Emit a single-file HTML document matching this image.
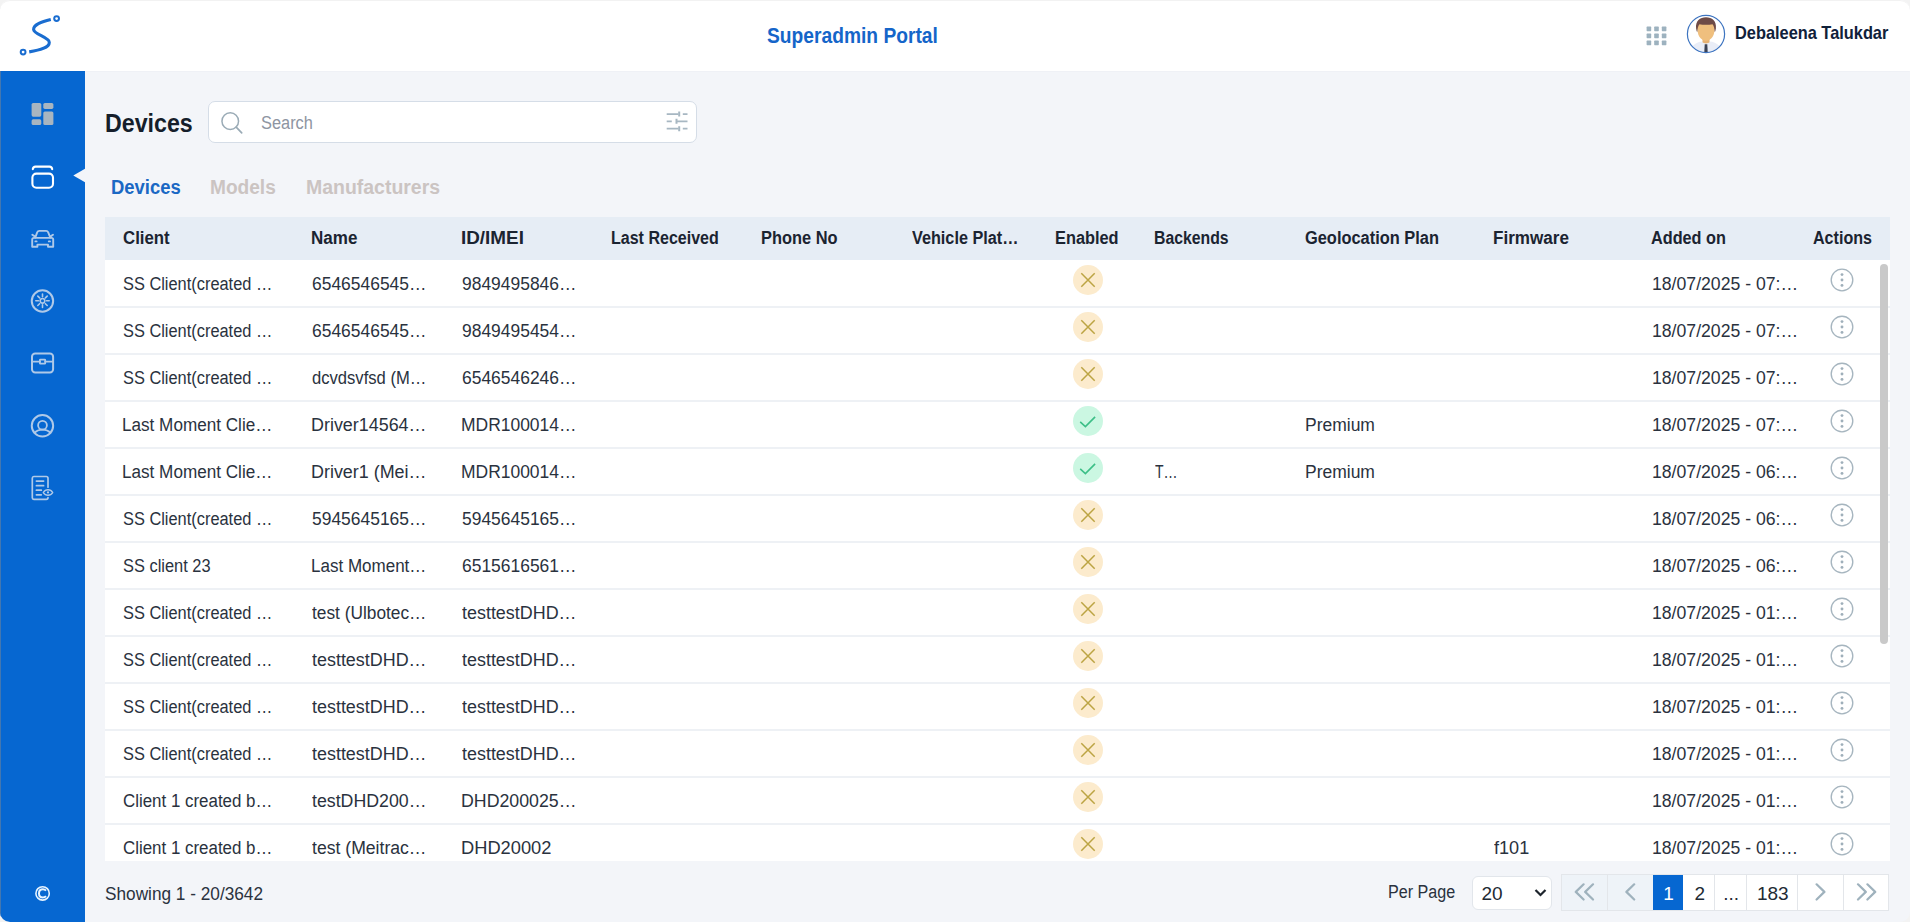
<!DOCTYPE html>
<html lang="en">
<head>
<meta charset="utf-8">
<title>Devices - Superadmin Portal</title>
<style>
*{box-sizing:border-box;}
html,body{margin:0;padding:0;width:1910px;height:922px;overflow:hidden;background:#f3f3f3;}
body{font-family:"Liberation Sans", sans-serif;position:relative;}
.app{position:absolute;left:0;top:0;width:1910px;height:922px;border-radius:10px;overflow:hidden;background:#f3f5f9;}
.frame{position:absolute;left:0;top:0;width:1910px;height:922px;border-top:1px solid #f2f2f2;border-radius:10px;pointer-events:none;z-index:3;}
.sbedge{position:absolute;left:0;top:71px;width:1px;height:851px;background:#4377b0;z-index:3;}
.header{position:absolute;left:0;top:0;width:1910px;height:71px;background:#ffffff;box-shadow:0 0.5px 1.5px rgba(20,30,50,0.05);z-index:1;}
.sidebar{position:absolute;left:0;top:71px;width:85px;height:851px;background:#0667d1;overflow:hidden;}
.tx{position:absolute;white-space:nowrap;line-height:1;transform-origin:0 50%;z-index:2;}
.search{position:absolute;left:208px;top:100.6px;width:489px;height:42px;border:1.6px solid #d5dde7;border-radius:7px;background:#fff;}
.thead{position:absolute;left:105px;top:217px;width:1785px;height:43px;background:#e6edf5;}
.tbody{position:absolute;left:105px;top:260px;width:1785px;height:601px;background:#fff;overflow:hidden;}
.rline{position:absolute;left:0;width:1785px;height:2px;background:#eef1f5;}
.scroll{position:absolute;left:1880px;top:264px;width:8px;height:380px;border-radius:4px;background:#c9c9c9;}
.select{position:absolute;left:1471.5px;top:875.5px;width:80px;height:34.5px;border:1px solid #e2e6eb;border-radius:6px;background:#fff;}
.pag{position:absolute;left:1561px;top:874px;height:37px;width:328px;border:1px solid #e3e6ea;background:#fff;}
.pb{position:absolute;top:0;height:35px;}
.sep{position:absolute;top:0;width:1px;height:35px;background:#e3e6ea;}
</style>
</head>
<body>
<div class="app">
  <div class="header">
    <svg width="80" height="70" style="position:absolute;left:0;top:0" viewBox="0 0 80 70">
      <path d="M50.8,19.6 C42,21.8 33.6,24.3 33.6,29.5 C33.6,34.3 49.3,37.2 49.3,42.4 C49.3,47.6 40,50 29.2,51.9" fill="none" stroke="#1a6dd0" stroke-width="3.1" stroke-linecap="butt"/>
      <circle cx="56.6" cy="18.6" r="2.4" fill="none" stroke="#1a6dd0" stroke-width="2"/>
      <circle cx="23.1" cy="52.1" r="2.4" fill="none" stroke="#1a6dd0" stroke-width="2"/>
    </svg>
    <svg width="24" height="24" style="position:absolute;left:1645px;top:25px" viewBox="0 0 24 24">
      <g fill="#9db2bf">
        <rect x="1.6" y="1.6" width="4.6" height="4.6" rx="0.6"/><rect x="9.2" y="1.6" width="4.6" height="4.6" rx="0.6"/><rect x="16.8" y="1.6" width="4.6" height="4.6" rx="0.6"/>
        <rect x="1.6" y="8.6" width="4.6" height="4.6" rx="0.6"/><rect x="9.2" y="8.6" width="4.6" height="4.6" rx="0.6"/><rect x="16.8" y="8.6" width="4.6" height="4.6" rx="0.6"/>
        <rect x="1.6" y="15.6" width="4.6" height="4.6" rx="0.6"/><rect x="9.2" y="15.6" width="4.6" height="4.6" rx="0.6"/><rect x="16.8" y="15.6" width="4.6" height="4.6" rx="0.6"/>
      </g>
    </svg>
    <svg width="40" height="40" style="position:absolute;left:1686px;top:14px" viewBox="0 0 40 40">
      <defs><clipPath id="av"><circle cx="20" cy="20" r="18.6"/></clipPath></defs>
      <circle cx="20" cy="20" r="18.6" fill="#ffffff"/>
      <g clip-path="url(#av)">
        <path d="M3,42 C4,31 10,27.2 20,27.2 C30,27.2 36,31 37,42 Z" fill="#e9edf7"/>
        <path d="M16.5,23.5 L23.5,23.5 L23.5,28.3 C22,29.8 18,29.8 16.5,28.3 Z" fill="#e6b273"/>
        <path d="M18.7,30.2 L21.3,30.2 L21.8,40 L18.2,40 Z" fill="#3b4254"/>
        <path d="M11.2,13 C11.2,20.5 14,26.7 20,26.7 C26,26.7 28.8,20.5 28.8,13 C28.8,9.8 25,8.5 20,8.5 C15,8.5 11.2,9.8 11.2,13 Z" fill="#efbf7e"/>
        <path d="M10.1,14.5 C9.3,6.5 14,3.2 20,3.2 C26,3.2 30.7,6.5 29.9,14.5 C29.6,16 29.3,17.5 28.8,18.3 C28.5,14.5 27.8,11.3 26.5,10.2 C23,11 17,11 13.5,10.2 C12.2,11.3 11.5,14.5 11.2,18.3 C10.7,17.5 10.4,16 10.1,14.5 Z" fill="#6e4b47"/>
      </g>
      <circle cx="20" cy="20" r="18.6" fill="none" stroke="#3d74c0" stroke-width="1.2"/>
    </svg>
  </div>
  <div class="sidebar">
    <svg width="85" height="851" style="position:absolute;left:0;top:0" viewBox="0 71 85 851">
      <!-- dashboard -->
      <g fill="#a8b5c0">
        <rect x="31.6" y="103" width="9.7" height="13.7" rx="1.6"/>
        <rect x="31.6" y="119.3" width="9.7" height="5.8" rx="1.6"/>
        <rect x="43.3" y="103" width="10.1" height="5.9" rx="1.6"/>
        <rect x="43.3" y="111.5" width="10.1" height="13.6" rx="1.6"/>
      </g>
      <!-- devices (active) -->
      <g fill="none" stroke="#ffffff" stroke-width="2.1" stroke-linecap="round">
        <path d="M32.8,169.2 C33,167.3 34,166.6 35.5,166.6 H49.5 C51,166.6 52,167.3 52.2,169.2"/>
        <rect x="32.4" y="173.6" width="20.6" height="14.2" rx="4"/>
      </g>
      <path d="M73.3,175.6 L86,168.3 L86,182.9 Z" fill="#f3f5f9"/>
      <g fill="none" stroke="#afc9e8" stroke-width="1.9" stroke-linecap="round" stroke-linejoin="round">
        <!-- car -->
        <path d="M35.2,237.6 L37.2,232.3 C37.6,231.3 38.3,230.9 39.3,230.9 H46.1 C47.1,230.9 47.8,231.3 48.2,232.3 L50.3,237.6"/>
        <path d="M32.3,234.7 L35.2,236.6 M53,234.7 L50.2,236.6"/>
        <path d="M34,237.9 H51.5 C52.5,237.9 53.2,238.6 53.2,239.6 V246.8 H48 V244.6 H37.4 V246.8 H32.2 V239.6 C32.2,238.6 32.9,237.9 34,237.9 Z"/>
        <path d="M35.4,241.4 H36.6 M48.8,241.4 H50"/>
        <!-- sun circle -->
        <circle cx="42.45" cy="301" r="10.7" stroke-width="2"/>
        <circle cx="42.5" cy="300.8" r="2.3" stroke-width="1.6"/>
        <path d="M42.5,294.1 V296.8 M42.5,304.8 V307.5 M35.8,300.8 H38.5 M46.5,300.8 H49.2 M37.8,296.1 L39.6,297.9 M45.4,303.7 L47.2,305.5 M47.2,296.1 L45.4,297.9 M39.6,303.7 L37.8,305.5" stroke-width="1.6"/>
        <!-- chest -->
        <rect x="32" y="353.5" width="21.1" height="18.9" rx="3.2" stroke-width="2"/>
        <path d="M32.5,361.6 H39.8 M45.3,361.6 H52.6" stroke-width="1.8"/>
        <rect x="39.9" y="359.6" width="5.3" height="4.1" rx="0.5" stroke-width="1.8"/>
        <!-- user -->
        <circle cx="42.45" cy="425.8" r="10.7" stroke-width="2"/>
        <circle cx="42.5" cy="425.3" r="4.4" stroke-width="1.8"/>
        <path d="M34.6,433 C36.3,430.8 38.8,429.6 42.5,429.6 C46.2,429.6 48.7,430.8 50.4,433" stroke-width="1.8"/>
        <!-- document eye -->
        <path d="M48,487.2 V478.2 C48,477 47.3,476.5 46.3,476.5 H33.8 C32.8,476.5 32.3,477.1 32.3,478.2 V497.7 C32.3,498.8 32.8,499.3 33.8,499.3 H46.3 C47.3,499.3 48,498.8 48,497.7" stroke-width="1.7"/>
        <path d="M36.4,481.1 H43.6 M36.4,485.7 H43.6 M36.4,490.2 H41.3 M36.4,494.8 H41.3" stroke-width="1.7"/>
        <path d="M43.3,492.6 C44.5,490.6 46,489.8 48,489.8 C50,489.8 51.5,490.6 52.7,492.6 C51.5,494.5 50,495.3 48,495.3 C46,495.3 44.5,494.5 43.3,492.6 Z" stroke-width="1.4"/>
        <circle cx="48" cy="492.4" r="1.1" fill="#afc9e8" stroke="none"/>
      </g>
      <!-- copyright -->
      <g fill="none" stroke="#e8f4ff" stroke-width="1.6">
        <circle cx="42.6" cy="893.4" r="6.7"/>
        <path d="M46,890.6 C45.2,889.7 44.1,889.3 42.9,889.3 C40.5,889.3 39,891.1 39,893.4 C39,895.7 40.5,897.4 42.9,897.4 C44.1,897.4 45.2,897 46,896.1" stroke-width="2"/>
      </g>
    </svg>
  </div>

  <div class="search">
    <svg width="26" height="26" style="position:absolute;left:12px;top:10.6px" viewBox="0 0 26 26">
      <circle cx="9.25" cy="9.15" r="8.3" fill="none" stroke="#9aabb6" stroke-width="1.5"/>
      <path d="M15.2,15.1 L20.7,20.8" stroke="#9aabb6" stroke-width="1.7" stroke-linecap="round"/>
    </svg>
    <svg width="26" height="26" style="position:absolute;left:456px;top:8px" viewBox="0 0 26 26">
      <g stroke="#a7b7c2" stroke-width="1.7" fill="none">
        <path d="M1.7,4.1 H13.5 M17.8,4.1 H22.5 M1.7,11.3 H6.8 M12,11.3 H22.5 M1.7,18.7 H13.5 M17.8,18.7 H22.5"/>
        <path d="M14.2,1.6 V6.6 M11.5,8.8 V13.8 M14.2,16.2 V21.2" stroke-width="2"/>
      </g>
    </svg>
  </div>

  <div class="thead"></div>
  <div class="tbody">
<div class="rline" style="top:46.0px"></div>
<div class="rline" style="top:93.0px"></div>
<div class="rline" style="top:140.0px"></div>
<div class="rline" style="top:187.0px"></div>
<div class="rline" style="top:234.0px"></div>
<div class="rline" style="top:281.0px"></div>
<div class="rline" style="top:328.0px"></div>
<div class="rline" style="top:375.0px"></div>
<div class="rline" style="top:422.0px"></div>
<div class="rline" style="top:469.0px"></div>
<div class="rline" style="top:516.0px"></div>
<div class="rline" style="top:563.0px"></div>
  </div>
  <div class="scroll"></div>

  <div class="select">
    <svg width="14" height="10" style="position:absolute;left:61.5px;top:11.5px" viewBox="0 0 14 10">
      <path d="M1.5,2 L6.5,7 L11.5,2" fill="none" stroke="#1e252d" stroke-width="2.2" stroke-linecap="butt"/>
    </svg>
  </div>
  <div class="pag">
<div class="pb" style="left:0.0px;width:45.5px;background:#eef3f8"></div>
<div class="pb" style="left:45.5px;width:45.5px;background:#eef3f8"></div>
<div class="pb" style="left:91.0px;width:30.0px;background:#0667d1"></div>
<div class="pb" style="left:121.0px;width:31.5px;background:#fff"></div>
<div class="pb" style="left:152.5px;width:32.1px;background:#fff"></div>
<div class="pb" style="left:184.6px;width:50.7px;background:#fff"></div>
<div class="pb" style="left:235.3px;width:46.1px;background:#fff"></div>
<div class="pb" style="left:281.4px;width:44.6px;background:#fff"></div>
<div class="sep" style="left:45.0px"></div>
<div class="sep" style="left:152.0px"></div>
<div class="sep" style="left:184.1px"></div>
<div class="sep" style="left:234.8px"></div>
<div class="sep" style="left:280.9px"></div>
<svg width="328" height="37" style="position:absolute;left:-1px;top:-1px" viewBox="1561 874 328 37"><path d="M1583.6,884.3 L1575.8,891.9 L1583.6,899.5 M1593,884.3 L1585.2,891.9 L1593,899.5 M1634.2,884.3 L1626.4,891.9 L1634.2,899.5 M1816.6,884.3 L1824.4,891.9 L1816.6,899.5 M1858,884.3 L1865.8,891.9 L1858,899.5 M1867.4,884.3 L1875.2,891.9 L1867.4,899.5" fill="none" stroke="#9fb2bd" stroke-width="2.2" stroke-linecap="round" stroke-linejoin="round"/></svg>
  </div>
<div class="sbedge"></div>
<svg class="ic" width="32" height="32" style="position:absolute;left:1072.0px;top:263.9px" viewBox="0 0 32 32"><circle cx="16" cy="16" r="15" fill="#fcebcd"/><path d="M9.3,9.3 L22.7,22.7 M22.7,9.3 L9.3,22.7" stroke="#bca443" stroke-width="1.5" fill="none"/></svg>
<svg width="26" height="26" style="position:absolute;left:1829.2px;top:266.8px" viewBox="0 0 26 26"><circle cx="13" cy="13" r="10.8" fill="none" stroke="#a6b5bf" stroke-width="1.35"/><circle cx="13" cy="7.6" r="1.45" fill="#9fafba"/><circle cx="13" cy="13" r="1.45" fill="#9fafba"/><circle cx="13" cy="18.4" r="1.45" fill="#9fafba"/></svg>
<svg class="ic" width="32" height="32" style="position:absolute;left:1072.0px;top:310.9px" viewBox="0 0 32 32"><circle cx="16" cy="16" r="15" fill="#fcebcd"/><path d="M9.3,9.3 L22.7,22.7 M22.7,9.3 L9.3,22.7" stroke="#bca443" stroke-width="1.5" fill="none"/></svg>
<svg width="26" height="26" style="position:absolute;left:1829.2px;top:313.8px" viewBox="0 0 26 26"><circle cx="13" cy="13" r="10.8" fill="none" stroke="#a6b5bf" stroke-width="1.35"/><circle cx="13" cy="7.6" r="1.45" fill="#9fafba"/><circle cx="13" cy="13" r="1.45" fill="#9fafba"/><circle cx="13" cy="18.4" r="1.45" fill="#9fafba"/></svg>
<svg class="ic" width="32" height="32" style="position:absolute;left:1072.0px;top:357.9px" viewBox="0 0 32 32"><circle cx="16" cy="16" r="15" fill="#fcebcd"/><path d="M9.3,9.3 L22.7,22.7 M22.7,9.3 L9.3,22.7" stroke="#bca443" stroke-width="1.5" fill="none"/></svg>
<svg width="26" height="26" style="position:absolute;left:1829.2px;top:360.8px" viewBox="0 0 26 26"><circle cx="13" cy="13" r="10.8" fill="none" stroke="#a6b5bf" stroke-width="1.35"/><circle cx="13" cy="7.6" r="1.45" fill="#9fafba"/><circle cx="13" cy="13" r="1.45" fill="#9fafba"/><circle cx="13" cy="18.4" r="1.45" fill="#9fafba"/></svg>
<svg class="ic" width="32" height="32" style="position:absolute;left:1072.0px;top:404.9px" viewBox="0 0 32 32"><circle cx="16" cy="16" r="15" fill="#cbf7e2"/><path d="M8.2,16.9 L13.4,21.6 L23.1,11.9" stroke="#3cbf87" stroke-width="1.6" fill="none"/></svg>
<svg width="26" height="26" style="position:absolute;left:1829.2px;top:407.8px" viewBox="0 0 26 26"><circle cx="13" cy="13" r="10.8" fill="none" stroke="#a6b5bf" stroke-width="1.35"/><circle cx="13" cy="7.6" r="1.45" fill="#9fafba"/><circle cx="13" cy="13" r="1.45" fill="#9fafba"/><circle cx="13" cy="18.4" r="1.45" fill="#9fafba"/></svg>
<svg class="ic" width="32" height="32" style="position:absolute;left:1072.0px;top:451.9px" viewBox="0 0 32 32"><circle cx="16" cy="16" r="15" fill="#cbf7e2"/><path d="M8.2,16.9 L13.4,21.6 L23.1,11.9" stroke="#3cbf87" stroke-width="1.6" fill="none"/></svg>
<svg width="26" height="26" style="position:absolute;left:1829.2px;top:454.8px" viewBox="0 0 26 26"><circle cx="13" cy="13" r="10.8" fill="none" stroke="#a6b5bf" stroke-width="1.35"/><circle cx="13" cy="7.6" r="1.45" fill="#9fafba"/><circle cx="13" cy="13" r="1.45" fill="#9fafba"/><circle cx="13" cy="18.4" r="1.45" fill="#9fafba"/></svg>
<svg class="ic" width="32" height="32" style="position:absolute;left:1072.0px;top:498.9px" viewBox="0 0 32 32"><circle cx="16" cy="16" r="15" fill="#fcebcd"/><path d="M9.3,9.3 L22.7,22.7 M22.7,9.3 L9.3,22.7" stroke="#bca443" stroke-width="1.5" fill="none"/></svg>
<svg width="26" height="26" style="position:absolute;left:1829.2px;top:501.8px" viewBox="0 0 26 26"><circle cx="13" cy="13" r="10.8" fill="none" stroke="#a6b5bf" stroke-width="1.35"/><circle cx="13" cy="7.6" r="1.45" fill="#9fafba"/><circle cx="13" cy="13" r="1.45" fill="#9fafba"/><circle cx="13" cy="18.4" r="1.45" fill="#9fafba"/></svg>
<svg class="ic" width="32" height="32" style="position:absolute;left:1072.0px;top:545.9px" viewBox="0 0 32 32"><circle cx="16" cy="16" r="15" fill="#fcebcd"/><path d="M9.3,9.3 L22.7,22.7 M22.7,9.3 L9.3,22.7" stroke="#bca443" stroke-width="1.5" fill="none"/></svg>
<svg width="26" height="26" style="position:absolute;left:1829.2px;top:548.8px" viewBox="0 0 26 26"><circle cx="13" cy="13" r="10.8" fill="none" stroke="#a6b5bf" stroke-width="1.35"/><circle cx="13" cy="7.6" r="1.45" fill="#9fafba"/><circle cx="13" cy="13" r="1.45" fill="#9fafba"/><circle cx="13" cy="18.4" r="1.45" fill="#9fafba"/></svg>
<svg class="ic" width="32" height="32" style="position:absolute;left:1072.0px;top:592.9px" viewBox="0 0 32 32"><circle cx="16" cy="16" r="15" fill="#fcebcd"/><path d="M9.3,9.3 L22.7,22.7 M22.7,9.3 L9.3,22.7" stroke="#bca443" stroke-width="1.5" fill="none"/></svg>
<svg width="26" height="26" style="position:absolute;left:1829.2px;top:595.8px" viewBox="0 0 26 26"><circle cx="13" cy="13" r="10.8" fill="none" stroke="#a6b5bf" stroke-width="1.35"/><circle cx="13" cy="7.6" r="1.45" fill="#9fafba"/><circle cx="13" cy="13" r="1.45" fill="#9fafba"/><circle cx="13" cy="18.4" r="1.45" fill="#9fafba"/></svg>
<svg class="ic" width="32" height="32" style="position:absolute;left:1072.0px;top:639.9px" viewBox="0 0 32 32"><circle cx="16" cy="16" r="15" fill="#fcebcd"/><path d="M9.3,9.3 L22.7,22.7 M22.7,9.3 L9.3,22.7" stroke="#bca443" stroke-width="1.5" fill="none"/></svg>
<svg width="26" height="26" style="position:absolute;left:1829.2px;top:642.8px" viewBox="0 0 26 26"><circle cx="13" cy="13" r="10.8" fill="none" stroke="#a6b5bf" stroke-width="1.35"/><circle cx="13" cy="7.6" r="1.45" fill="#9fafba"/><circle cx="13" cy="13" r="1.45" fill="#9fafba"/><circle cx="13" cy="18.4" r="1.45" fill="#9fafba"/></svg>
<svg class="ic" width="32" height="32" style="position:absolute;left:1072.0px;top:686.9px" viewBox="0 0 32 32"><circle cx="16" cy="16" r="15" fill="#fcebcd"/><path d="M9.3,9.3 L22.7,22.7 M22.7,9.3 L9.3,22.7" stroke="#bca443" stroke-width="1.5" fill="none"/></svg>
<svg width="26" height="26" style="position:absolute;left:1829.2px;top:689.8px" viewBox="0 0 26 26"><circle cx="13" cy="13" r="10.8" fill="none" stroke="#a6b5bf" stroke-width="1.35"/><circle cx="13" cy="7.6" r="1.45" fill="#9fafba"/><circle cx="13" cy="13" r="1.45" fill="#9fafba"/><circle cx="13" cy="18.4" r="1.45" fill="#9fafba"/></svg>
<svg class="ic" width="32" height="32" style="position:absolute;left:1072.0px;top:733.9px" viewBox="0 0 32 32"><circle cx="16" cy="16" r="15" fill="#fcebcd"/><path d="M9.3,9.3 L22.7,22.7 M22.7,9.3 L9.3,22.7" stroke="#bca443" stroke-width="1.5" fill="none"/></svg>
<svg width="26" height="26" style="position:absolute;left:1829.2px;top:736.8px" viewBox="0 0 26 26"><circle cx="13" cy="13" r="10.8" fill="none" stroke="#a6b5bf" stroke-width="1.35"/><circle cx="13" cy="7.6" r="1.45" fill="#9fafba"/><circle cx="13" cy="13" r="1.45" fill="#9fafba"/><circle cx="13" cy="18.4" r="1.45" fill="#9fafba"/></svg>
<svg class="ic" width="32" height="32" style="position:absolute;left:1072.0px;top:780.9px" viewBox="0 0 32 32"><circle cx="16" cy="16" r="15" fill="#fcebcd"/><path d="M9.3,9.3 L22.7,22.7 M22.7,9.3 L9.3,22.7" stroke="#bca443" stroke-width="1.5" fill="none"/></svg>
<svg width="26" height="26" style="position:absolute;left:1829.2px;top:783.8px" viewBox="0 0 26 26"><circle cx="13" cy="13" r="10.8" fill="none" stroke="#a6b5bf" stroke-width="1.35"/><circle cx="13" cy="7.6" r="1.45" fill="#9fafba"/><circle cx="13" cy="13" r="1.45" fill="#9fafba"/><circle cx="13" cy="18.4" r="1.45" fill="#9fafba"/></svg>
<svg class="ic" width="32" height="32" style="position:absolute;left:1072.0px;top:827.9px" viewBox="0 0 32 32"><circle cx="16" cy="16" r="15" fill="#fcebcd"/><path d="M9.3,9.3 L22.7,22.7 M22.7,9.3 L9.3,22.7" stroke="#bca443" stroke-width="1.5" fill="none"/></svg>
<svg width="26" height="26" style="position:absolute;left:1829.2px;top:830.8px" viewBox="0 0 26 26"><circle cx="13" cy="13" r="10.8" fill="none" stroke="#a6b5bf" stroke-width="1.35"/><circle cx="13" cy="7.6" r="1.45" fill="#9fafba"/><circle cx="13" cy="13" r="1.45" fill="#9fafba"/><circle cx="13" cy="18.4" r="1.45" fill="#9fafba"/></svg>
<span class="tx" style="left:767.0px;top:25.60px;font-size:21.5px;font-weight:700;color:#1565c9;transform:scaleX(0.8939);">Superadmin Portal</span>
<span class="tx" style="left:1735.1px;top:23.12px;font-size:19px;font-weight:700;color:#10213a;transform:scaleX(0.8609);">Debaleena Talukdar</span>
<span class="tx" style="left:105.1px;top:110.94px;font-size:25px;font-weight:700;color:#151e2b;transform:scaleX(0.9286);">Devices</span>
<span class="tx" style="left:261.0px;top:113.96px;font-size:18px;font-weight:400;color:#8e95a2;transform:scaleX(0.9104);">Search</span>
<span class="tx" style="left:110.5px;top:177.07px;font-size:20px;font-weight:700;color:#1a68c4;transform:scaleX(0.9222);">Devices</span>
<span class="tx" style="left:210.2px;top:177.07px;font-size:20px;font-weight:700;color:#cbc4c2;transform:scaleX(0.9547);">Models</span>
<span class="tx" style="left:306.0px;top:177.07px;font-size:20px;font-weight:700;color:#cbc4c2;transform:scaleX(0.9730);">Manufacturers</span>
<span class="tx" style="left:123.0px;top:229.46px;font-size:18px;font-weight:700;color:#1b2431;transform:scaleX(0.9339);">Client</span>
<span class="tx" style="left:311.1px;top:229.46px;font-size:18px;font-weight:700;color:#1b2431;transform:scaleX(0.9455);">Name</span>
<span class="tx" style="left:461.0px;top:229.46px;font-size:18px;font-weight:700;color:#1b2431;transform:scaleX(1.0482);">ID/IMEI</span>
<span class="tx" style="left:611.1px;top:229.46px;font-size:18px;font-weight:700;color:#1b2431;transform:scaleX(0.8903);">Last Received</span>
<span class="tx" style="left:761.1px;top:229.46px;font-size:18px;font-weight:700;color:#1b2431;transform:scaleX(0.9120);">Phone No</span>
<span class="tx" style="left:912.4px;top:229.46px;font-size:18px;font-weight:700;color:#1b2431;transform:scaleX(0.9013);">Vehicle Plat…</span>
<span class="tx" style="left:1055.3px;top:229.46px;font-size:18px;font-weight:700;color:#1b2431;transform:scaleX(0.9086);">Enabled</span>
<span class="tx" style="left:1154.4px;top:229.46px;font-size:18px;font-weight:700;color:#1b2431;transform:scaleX(0.8770);">Backends</span>
<span class="tx" style="left:1304.6px;top:229.46px;font-size:18px;font-weight:700;color:#1b2431;transform:scaleX(0.9108);">Geolocation Plan</span>
<span class="tx" style="left:1492.6px;top:229.46px;font-size:18px;font-weight:700;color:#1b2431;transform:scaleX(0.9491);">Firmware</span>
<span class="tx" style="left:1651.0px;top:229.46px;font-size:18px;font-weight:700;color:#1b2431;transform:scaleX(0.9025);">Added on</span>
<span class="tx" style="left:1813.2px;top:229.46px;font-size:18px;font-weight:700;color:#1b2431;transform:scaleX(0.8940);">Actions</span>
<span class="tx" style="left:123.0px;top:274.96px;font-size:18px;font-weight:400;color:#2a323e;transform:scaleX(0.9101);">SS Client(created …</span>
<span class="tx" style="left:312.0px;top:274.96px;font-size:18px;font-weight:400;color:#2a323e;transform:scaleX(0.9689);">6546546545…</span>
<span class="tx" style="left:462.0px;top:274.96px;font-size:18px;font-weight:400;color:#2a323e;transform:scaleX(0.9689);">9849495846…</span>
<span class="tx" style="left:1651.5px;top:274.96px;font-size:18px;font-weight:400;color:#2a323e;transform:scaleX(0.9801);">18/07/2025 - 07:…</span>
<span class="tx" style="left:123.0px;top:321.96px;font-size:18px;font-weight:400;color:#2a323e;transform:scaleX(0.9101);">SS Client(created …</span>
<span class="tx" style="left:312.0px;top:321.96px;font-size:18px;font-weight:400;color:#2a323e;transform:scaleX(0.9689);">6546546545…</span>
<span class="tx" style="left:462.0px;top:321.96px;font-size:18px;font-weight:400;color:#2a323e;transform:scaleX(0.9689);">9849495454…</span>
<span class="tx" style="left:1651.5px;top:321.96px;font-size:18px;font-weight:400;color:#2a323e;transform:scaleX(0.9801);">18/07/2025 - 07:…</span>
<span class="tx" style="left:123.0px;top:368.96px;font-size:18px;font-weight:400;color:#2a323e;transform:scaleX(0.9101);">SS Client(created …</span>
<span class="tx" style="left:312.0px;top:368.96px;font-size:18px;font-weight:400;color:#2a323e;transform:scaleX(0.9220);">dcvdsvfsd (M…</span>
<span class="tx" style="left:462.0px;top:368.96px;font-size:18px;font-weight:400;color:#2a323e;transform:scaleX(0.9689);">6546546246…</span>
<span class="tx" style="left:1651.5px;top:368.96px;font-size:18px;font-weight:400;color:#2a323e;transform:scaleX(0.9801);">18/07/2025 - 07:…</span>
<span class="tx" style="left:122.0px;top:415.96px;font-size:18px;font-weight:400;color:#2a323e;transform:scaleX(0.9513);">Last Moment Clie…</span>
<span class="tx" style="left:311.0px;top:415.96px;font-size:18px;font-weight:400;color:#2a323e;transform:scaleX(0.9951);">Driver14564…</span>
<span class="tx" style="left:461.0px;top:415.96px;font-size:18px;font-weight:400;color:#2a323e;transform:scaleX(0.9694);">MDR100014…</span>
<span class="tx" style="left:1305.1px;top:415.96px;font-size:18px;font-weight:400;color:#2a323e;transform:scaleX(0.9712);">Premium</span>
<span class="tx" style="left:1651.5px;top:415.96px;font-size:18px;font-weight:400;color:#2a323e;transform:scaleX(0.9801);">18/07/2025 - 07:…</span>
<span class="tx" style="left:122.0px;top:462.96px;font-size:18px;font-weight:400;color:#2a323e;transform:scaleX(0.9513);">Last Moment Clie…</span>
<span class="tx" style="left:311.0px;top:462.96px;font-size:18px;font-weight:400;color:#2a323e;transform:scaleX(0.9955);">Driver1 (Mei…</span>
<span class="tx" style="left:461.0px;top:462.96px;font-size:18px;font-weight:400;color:#2a323e;transform:scaleX(0.9694);">MDR100014…</span>
<span class="tx" style="left:1155.1px;top:462.96px;font-size:18px;font-weight:400;color:#2a323e;transform:scaleX(0.7779);">T…</span>
<span class="tx" style="left:1305.1px;top:462.96px;font-size:18px;font-weight:400;color:#2a323e;transform:scaleX(0.9712);">Premium</span>
<span class="tx" style="left:1651.5px;top:462.96px;font-size:18px;font-weight:400;color:#2a323e;transform:scaleX(0.9801);">18/07/2025 - 06:…</span>
<span class="tx" style="left:123.0px;top:509.96px;font-size:18px;font-weight:400;color:#2a323e;transform:scaleX(0.9101);">SS Client(created …</span>
<span class="tx" style="left:312.0px;top:509.96px;font-size:18px;font-weight:400;color:#2a323e;transform:scaleX(0.9689);">5945645165…</span>
<span class="tx" style="left:462.0px;top:509.96px;font-size:18px;font-weight:400;color:#2a323e;transform:scaleX(0.9689);">5945645165…</span>
<span class="tx" style="left:1651.5px;top:509.96px;font-size:18px;font-weight:400;color:#2a323e;transform:scaleX(0.9801);">18/07/2025 - 06:…</span>
<span class="tx" style="left:123.0px;top:556.96px;font-size:18px;font-weight:400;color:#2a323e;transform:scaleX(0.9110);">SS client 23</span>
<span class="tx" style="left:311.1px;top:556.96px;font-size:18px;font-weight:400;color:#2a323e;transform:scaleX(0.9450);">Last Moment…</span>
<span class="tx" style="left:462.0px;top:556.96px;font-size:18px;font-weight:400;color:#2a323e;transform:scaleX(0.9689);">6515616561…</span>
<span class="tx" style="left:1651.5px;top:556.96px;font-size:18px;font-weight:400;color:#2a323e;transform:scaleX(0.9801);">18/07/2025 - 06:…</span>
<span class="tx" style="left:123.0px;top:603.96px;font-size:18px;font-weight:400;color:#2a323e;transform:scaleX(0.9101);">SS Client(created …</span>
<span class="tx" style="left:312.0px;top:603.96px;font-size:18px;font-weight:400;color:#2a323e;transform:scaleX(0.9612);">test (Ulbotec…</span>
<span class="tx" style="left:462.0px;top:603.96px;font-size:18px;font-weight:400;color:#2a323e;transform:scaleX(0.9954);">testtestDHD…</span>
<span class="tx" style="left:1651.5px;top:603.96px;font-size:18px;font-weight:400;color:#2a323e;transform:scaleX(0.9801);">18/07/2025 - 01:…</span>
<span class="tx" style="left:123.0px;top:650.96px;font-size:18px;font-weight:400;color:#2a323e;transform:scaleX(0.9101);">SS Client(created …</span>
<span class="tx" style="left:312.0px;top:650.96px;font-size:18px;font-weight:400;color:#2a323e;transform:scaleX(0.9954);">testtestDHD…</span>
<span class="tx" style="left:462.0px;top:650.96px;font-size:18px;font-weight:400;color:#2a323e;transform:scaleX(0.9954);">testtestDHD…</span>
<span class="tx" style="left:1651.5px;top:650.96px;font-size:18px;font-weight:400;color:#2a323e;transform:scaleX(0.9801);">18/07/2025 - 01:…</span>
<span class="tx" style="left:123.0px;top:697.96px;font-size:18px;font-weight:400;color:#2a323e;transform:scaleX(0.9101);">SS Client(created …</span>
<span class="tx" style="left:312.0px;top:697.96px;font-size:18px;font-weight:400;color:#2a323e;transform:scaleX(0.9954);">testtestDHD…</span>
<span class="tx" style="left:462.0px;top:697.96px;font-size:18px;font-weight:400;color:#2a323e;transform:scaleX(0.9954);">testtestDHD…</span>
<span class="tx" style="left:1651.5px;top:697.96px;font-size:18px;font-weight:400;color:#2a323e;transform:scaleX(0.9801);">18/07/2025 - 01:…</span>
<span class="tx" style="left:123.0px;top:744.96px;font-size:18px;font-weight:400;color:#2a323e;transform:scaleX(0.9101);">SS Client(created …</span>
<span class="tx" style="left:312.0px;top:744.96px;font-size:18px;font-weight:400;color:#2a323e;transform:scaleX(0.9954);">testtestDHD…</span>
<span class="tx" style="left:462.0px;top:744.96px;font-size:18px;font-weight:400;color:#2a323e;transform:scaleX(0.9954);">testtestDHD…</span>
<span class="tx" style="left:1651.5px;top:744.96px;font-size:18px;font-weight:400;color:#2a323e;transform:scaleX(0.9801);">18/07/2025 - 01:…</span>
<span class="tx" style="left:123.0px;top:791.96px;font-size:18px;font-weight:400;color:#2a323e;transform:scaleX(0.9390);">Client 1 created b…</span>
<span class="tx" style="left:312.0px;top:791.96px;font-size:18px;font-weight:400;color:#2a323e;transform:scaleX(0.9865);">testDHD200…</span>
<span class="tx" style="left:461.0px;top:791.96px;font-size:18px;font-weight:400;color:#2a323e;transform:scaleX(0.9863);">DHD200025…</span>
<span class="tx" style="left:1651.5px;top:791.96px;font-size:18px;font-weight:400;color:#2a323e;transform:scaleX(0.9801);">18/07/2025 - 01:…</span>
<span class="tx" style="left:123.0px;top:838.96px;font-size:18px;font-weight:400;color:#2a323e;transform:scaleX(0.9390);">Client 1 created b…</span>
<span class="tx" style="left:312.0px;top:838.96px;font-size:18px;font-weight:400;color:#2a323e;transform:scaleX(0.9781);">test (Meitrac…</span>
<span class="tx" style="left:461.0px;top:838.96px;font-size:18px;font-weight:400;color:#2a323e;transform:scaleX(1.0154);">DHD20002</span>
<span class="tx" style="left:1494.0px;top:838.96px;font-size:18px;font-weight:400;color:#2a323e;transform:scaleX(1.0051);">f101</span>
<span class="tx" style="left:1651.5px;top:838.96px;font-size:18px;font-weight:400;color:#2a323e;transform:scaleX(0.9801);">18/07/2025 - 01:…</span>
<span class="tx" style="left:105.3px;top:884.66px;font-size:18px;font-weight:400;color:#2a323e;transform:scaleX(0.9569);">Showing 1 - 20/3642</span>
<span class="tx" style="left:1388.4px;top:883.26px;font-size:18px;font-weight:400;color:#2a323e;transform:scaleX(0.8968);">Per Page</span>
<span class="tx" style="left:1663.3px;top:883.82px;font-size:19px;font-weight:400;color:#ffffff;">1</span>
<span class="tx" style="left:1694.5px;top:883.82px;font-size:19px;font-weight:400;color:#222a33;">2</span>
<span class="tx" style="left:1723.2px;top:883.82px;font-size:19px;font-weight:400;color:#222a33;">...</span>
<span class="tx" style="left:1756.9px;top:883.82px;font-size:19px;font-weight:400;color:#222a33;">183</span>
<span class="tx" style="left:1481.5px;top:883.62px;font-size:19px;font-weight:400;color:#222a33;">20</span>
</div>
<div class="frame"></div>
</body>
</html>
